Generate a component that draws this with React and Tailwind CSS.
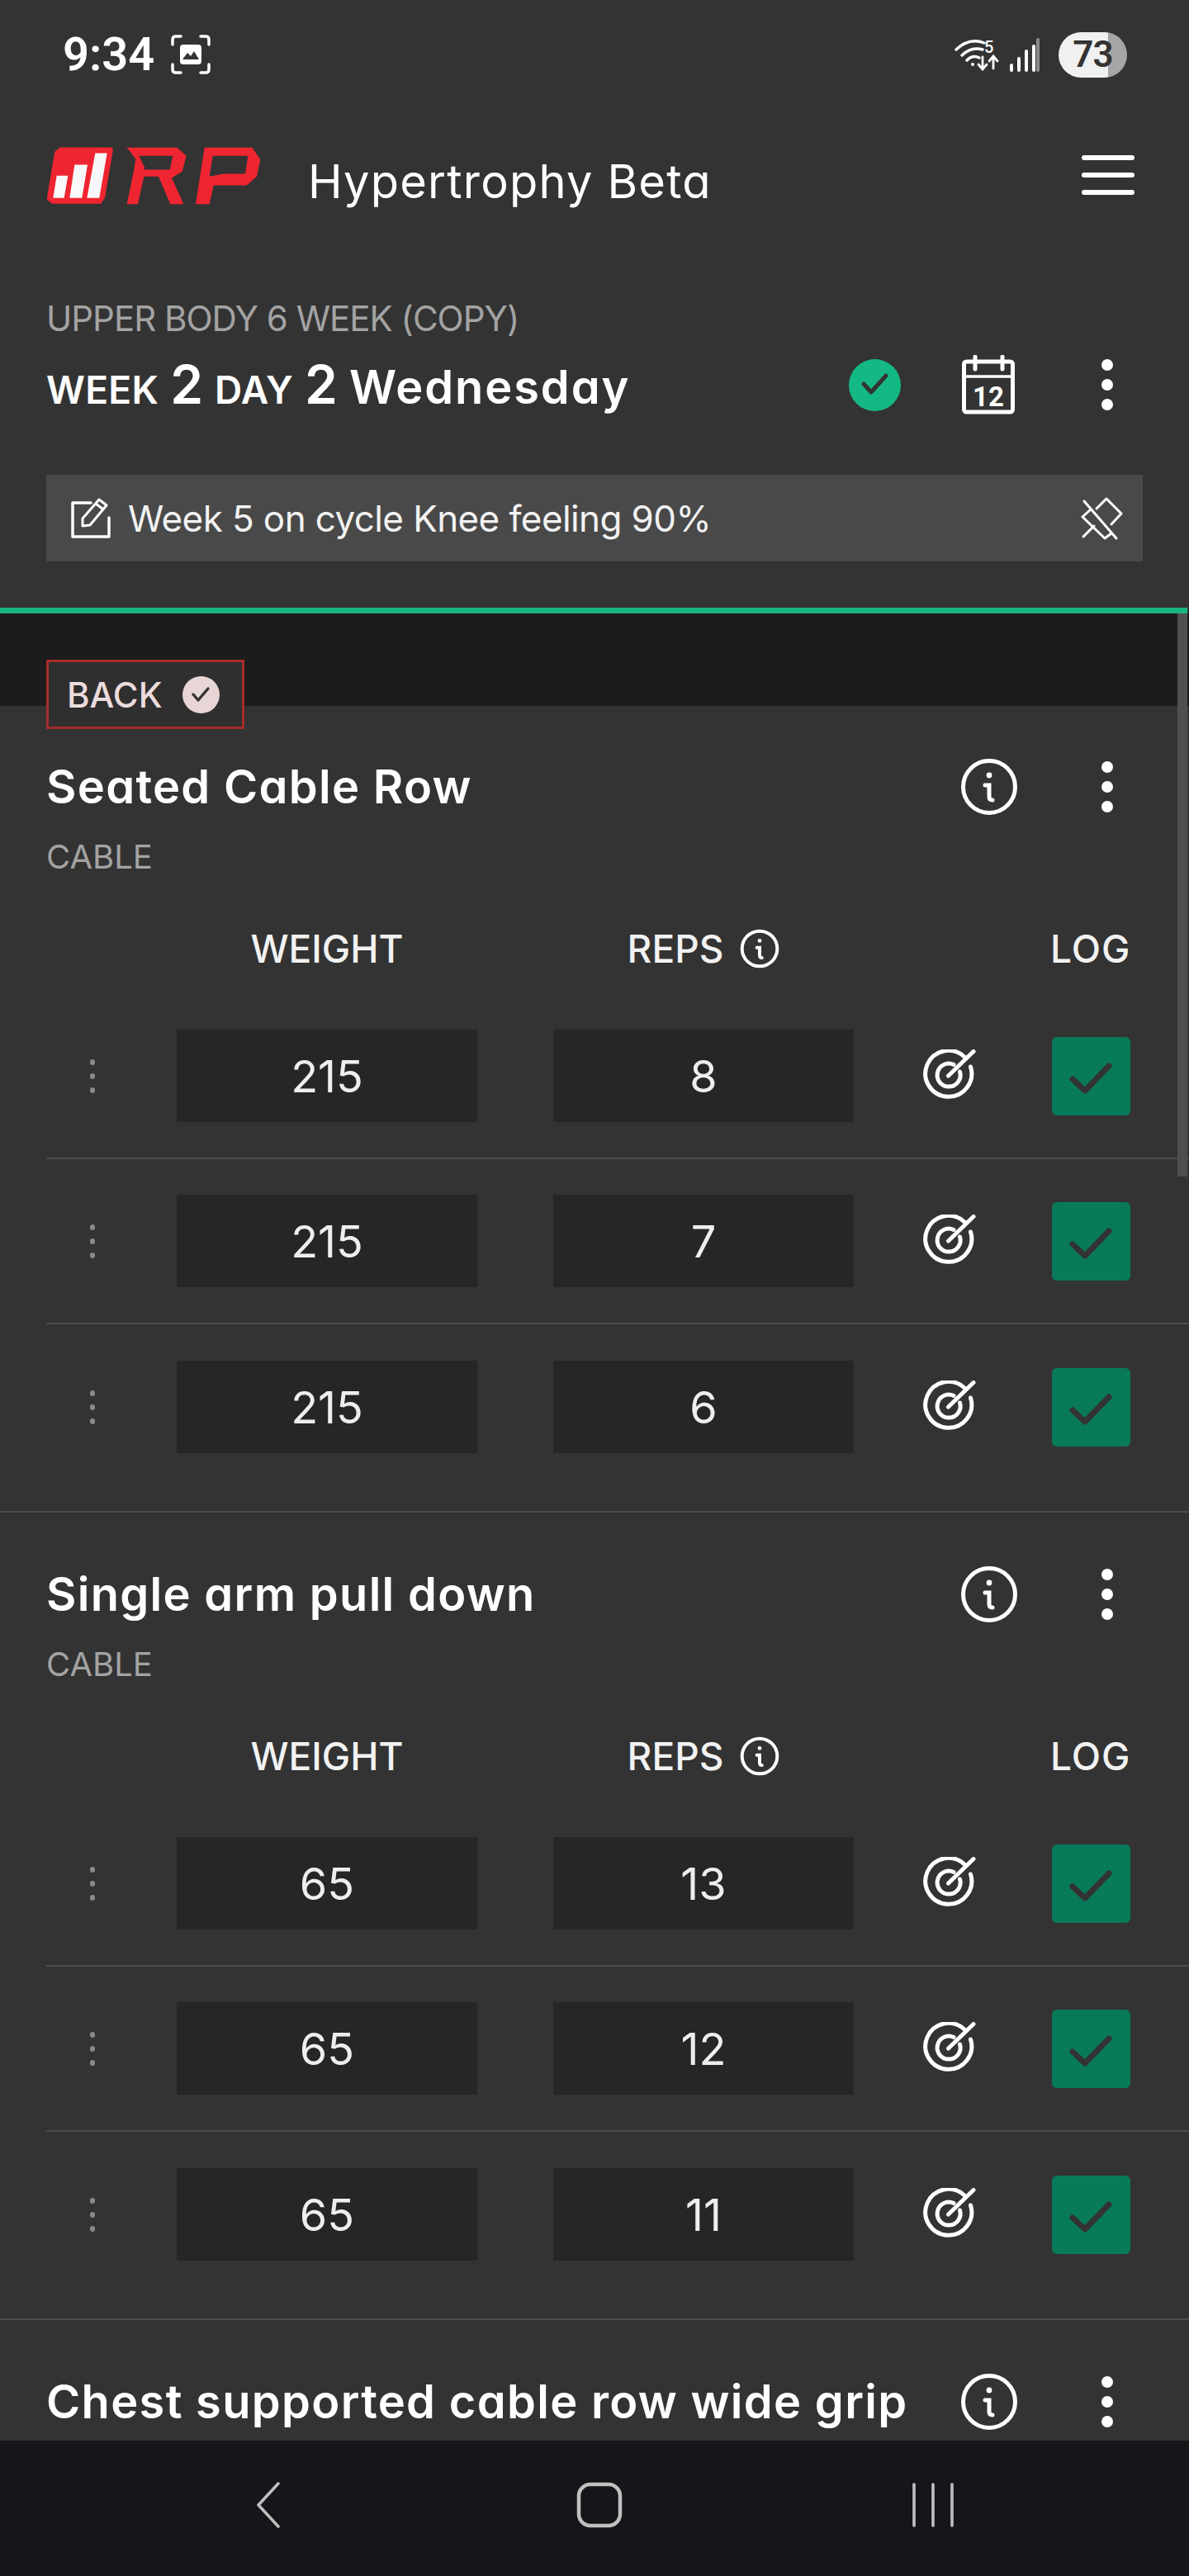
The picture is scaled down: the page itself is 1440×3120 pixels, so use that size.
const font = "font-['Inter',sans-serif] [font-feature-settings:'cv11']"

function Dots({ className = 'bg-white', size = 'w-[14px] h-[14px]', gap = 'gap-[10px]' }) {
  return (
    <div className={`flex flex-col items-center ${gap}`}>
      <span className={`rounded-full ${size} ${className}`} />
      <span className={`rounded-full ${size} ${className}`} />
      <span className={`rounded-full ${size} ${className}`} />
    </div>
  )
}

function InfoIcon({ size = 70, stroke = 5 }) {
  return (
    <svg width={size} height={size} viewBox="0 0 70 70" fill="none" stroke="white" strokeWidth={stroke * (70 / size)} strokeLinecap="round">
      <circle cx="35" cy="35" r={35 - (stroke * (70 / size)) / 2 - 1} />
      <circle cx="35" cy="21" r="3.4" fill="white" stroke="none" />
      <path d="M30 33 H35 V47 Q35 51 39 51" />
    </svg>
  )
}

function TargetIcon() {
  return (
    <svg width="64" height="64" viewBox="0 0 64 64" fill="none" stroke="white" strokeWidth="5" strokeLinecap="round">
      <path d="M50 9 A28 28 0 1 0 57.5 21" />
      <path d="M37 18.4 A14 14 0 1 0 44.5 27" />
      <path d="M30.5 32 L61 2.5" />
    </svg>
  )
}

function CheckBox() {
  return (
    <div className="w-[95px] h-[95px] rounded-[6px] bg-[#087a5a] flex items-center justify-center">
      <svg width="95" height="95" viewBox="0 0 95 95" fill="none" stroke="#333333" strokeWidth="7" strokeLinecap="round" strokeLinejoin="round">
        <path d="M25 51 L40 65 L69 35" />
      </svg>
    </div>
  )
}

function SetRow({ weight, reps, last }) {
  return (
    <div className={`h-[200px] ml-[56px] flex items-center ${last ? '' : 'border-b-2 border-[#4c4c4c]'}`}>
      <div className="w-[158px] flex justify-start pl-[53px]">
        <Dots className="bg-[#8a8a8a]" size="w-[6px] h-[7px]" gap="gap-[10px]" />
      </div>
      <div className="w-[364px] h-[112px] bg-[#262626] flex items-center justify-center text-[54px] text-[#eeeeee]">{weight}</div>
      <div className="w-[364px] h-[112px] ml-[92px] bg-[#262626] flex items-center justify-center text-[54px] text-[#eeeeee]">{reps}</div>
      <div className="ml-[84px]"><TargetIcon /></div>
      <div className="ml-[92px]"><CheckBox /></div>
    </div>
  )
}

function Exercise({ name, sets }) {
  return (
    <section className={sets.length ? 'pb-[26px] border-b-2 border-[#4c4c4c]' : ''}>
      <div className="h-[70px] pl-[56px] pr-[92px] flex items-center justify-between">
        <h2 className="text-[56px] font-semibold text-white tracking-[1.3px] whitespace-nowrap">{name}</h2>
        <div className="flex items-center gap-[101px]">
          <InfoIcon />
          <Dots />
        </div>
      </div>
      {sets.length > 0 && (
        <>
          <div className="mt-[26px] pl-[56px] text-[40px] leading-[48px] text-[#a3a3a3]">CABLE</div>
          <div className="mt-[62px] h-[50px] flex items-center text-[46px] font-medium text-[#f2f2f2]">
            <div className="ml-[214px] w-[364px] text-center">WEIGHT</div>
            <div className="ml-[92px] w-[364px] flex items-center justify-center gap-[20px]">
              <span>REPS</span>
              <InfoIcon size={48} stroke={4} />
            </div>
            <div className="ml-[238px] w-[96px] text-center tracking-[1px]">LOG</div>
          </div>
          <div className="mt-[30px]">
            {sets.map((s, i) => (
              <SetRow key={i} weight={s[0]} reps={s[1]} last={i === sets.length - 1} />
            ))}
          </div>
        </>
      )}
    </section>
  )
}

function Logo() {
  return (
    <svg width="260" height="71" viewBox="50 80 780 212" className="shrink-0">
      <path fill="#ef2531" d="M98 84 H278 Q291 84 289 97 L260 268 L245 289 H68 L50 274 V265 L78 100 Z" />
      <path fill="#f8f8f8" d="M85 187 H126 L112 268 H72 Z M150 147 H197 L177 268 H132 Z M225 105 H268 L240 268 H195 Z" />
      <path fill="#ef2531" fillRule="evenodd" d="M340 85 H522 L556 115 L541 172 L503 195 L546 290 H498 L455 190 H402 L380 290 H340 L366 165 L372 125 Z M384 115 H507 L496 165 H402 L405 158 Z" />
      <path fill="#ef2531" fillRule="evenodd" d="M622 85 H795 L825 128 L812 190 L775 222 H655 L640 290 H590 Z M652 115 L640 190 L690 180 H770 L780 115 Z" />
    </svg>
  )
}

function StatusBar() {
  return (
    <div className="h-[132px] pl-[76px] pr-[75px] flex items-center justify-between font-['Roboto',sans-serif]">
      <div className="flex items-center gap-[20px]">
        <span className="text-[56px] font-semibold text-white leading-none">9:34</span>
        <svg width="48" height="48" viewBox="0 0 48 48" fill="none" stroke="white" strokeWidth="3.5" strokeLinecap="round">
          <path d="M2 12 V6 Q2 2 6 2 H12 M36 2 H42 Q46 2 46 6 V12 M46 36 V42 Q46 46 42 46 H36 M12 46 H6 Q2 46 2 42 V36" />
          <rect x="11" y="12" width="26" height="24" rx="4" fill="white" stroke="none" />
          <path d="M14 30 L20 22 L24 26 L28 20 L34 30 Z" fill="#333333" stroke="none" />
        </svg>
      </div>
      <div className="flex items-center">
        <svg width="54" height="40" viewBox="0 0 54 40" fill="none" stroke="white" strokeWidth="3.4" strokeLinecap="round">
          <path d="M2 14 Q18 -1 36 6" />
          <path d="M9 21 Q20 10 34 14" />
          <path d="M15 27 Q22 20 30 24" />
          <circle cx="22" cy="32" r="2" fill="white" stroke="none" />
          <path d="M34 23 V37 M29 32 L34 38 L39 32" strokeWidth="2.8" />
          <path d="M47 37 V23 M42 28 L47 22 L52 28" strokeWidth="2.8" />
          <text x="36" y="18" fontSize="20" fill="white" stroke="none" fontWeight="500">5</text>
        </svg>
        <svg className="ml-[12px]" width="38" height="42" viewBox="0 0 38 42" fill="none" strokeWidth="4" strokeLinecap="round">
          <path d="M3 40 V34 M12 40 V26 M21 40 V17 M30 40 V11" stroke="white" />
          <path d="M35 40 V3" stroke="#8c8c8c" />
        </svg>
        <div className="ml-[22px] w-[83px] h-[55px] rounded-full bg-[linear-gradient(90deg,#f0f0f0_72%,#a6a6a6_72%)] flex items-center justify-center text-[44px] font-semibold text-[#333333] tracking-[-1px]">
          73
        </div>
      </div>
    </div>
  )
}

function TopBar() {
  return (
    <div className="h-[160px] pl-[57px] pr-[66px] flex items-center">
      <Logo />
      <div className="ml-[56px] text-[56px] text-white pt-[16px] tracking-[1.2px]">Hypertrophy Beta</div>
      <div className="ml-auto w-[64px] flex flex-col gap-[15px]">
        <span className="h-[6px] rounded-full bg-white" />
        <span className="h-[6px] rounded-full bg-white" />
        <span className="h-[6px] rounded-full bg-white" />
      </div>
    </div>
  )
}

function WorkoutHeader() {
  return (
    <>
      <div className="mt-[66px] pl-[56px] h-[54px] flex items-center text-[42px] text-[#a3a3a3] tracking-[-1px]">UPPER BODY 6 WEEK (COPY)</div>
      <div className="mt-[14px] h-[80px] pl-[56px] pr-[92px] flex items-center">
        <div className="flex items-baseline font-semibold text-white">
          <span className="text-[46px] tracking-[0.3px]">WEEK</span>
          <span className="text-[64px] ml-[14px]">2</span>
          <span className="text-[46px] ml-[14px] tracking-[0.3px]">DAY</span>
          <span className="text-[64px] ml-[14px]">2</span>
          <span className="ml-[14px] text-[56px] tracking-[1.9px]">Wednesday</span>
        </div>
        <div className="ml-auto w-[63px] h-[63px] rounded-full bg-[#14b885] flex items-center justify-center">
          <svg width="34" height="32" viewBox="0 0 34 32" fill="none" stroke="#333333" strokeWidth="5" strokeLinecap="round" strokeLinejoin="round">
            <path d="M3 15 L12 25 L30 5" />
          </svg>
        </div>
        <svg className="ml-[74px]" width="64" height="72" viewBox="0 0 64 72" fill="none" stroke="white" strokeWidth="5">
          <rect x="2.5" y="8" width="59" height="61" rx="3" />
          <path d="M2 26 H62" strokeWidth="3.5" />
          <path d="M16 2 V17 M49 2 V17" strokeLinecap="round" />
          <text x="32" y="62" textAnchor="middle" fontSize="33" fontWeight="700" fill="white" stroke="none" fontFamily="Roboto">12</text>
        </svg>
        <div className="ml-[105px]"><Dots /></div>
      </div>
      <div className="mt-[69px] mx-[56px] h-[105px] bg-[#494949] pl-[29px] pr-[24px] flex items-center">
        <svg width="50" height="50" viewBox="0 0 50 50" fill="none" stroke="white" strokeWidth="3.5" strokeLinecap="round" strokeLinejoin="round">
          <path d="M25 6 H3 V47 H47 V24" />
          <path d="M15 34 V25 L35 2 L44 9 L24 33 Z M31 7 L40 14" strokeWidth="3" />
        </svg>
        <span className="ml-[20px] text-[44px] text-[#f2f2f2] tracking-[-0.6px]">Week 5 on cycle Knee feeling 90%</span>
        <svg className="ml-auto" width="52" height="52" viewBox="0 0 52 52" fill="none" stroke="white" strokeWidth="3" strokeLinecap="round" strokeLinejoin="round">
          <path d="M5 5 L44 50" />
          <path d="M20 14 L32 2 L50 20 L38 33" />
          <path d="M13 15 L3 24 L30 50 L38 44" />
          <path d="M4 48 L17 35" />
        </svg>
      </div>
    </>
  )
}

const exercises = [
  { name: 'Seated Cable Row', sets: [['215', '8'], ['215', '7'], ['215', '6']] },
  { name: 'Single arm pull down', sets: [['65', '13'], ['65', '12'], ['65', '11']] },
  { name: 'Chest supported cable row wide grip', sets: [] },
]

export default function App() {
  return (
    <div className={`relative w-[1440px] h-[3120px] bg-[#333333] flex flex-col overflow-hidden ${font}`}>
      <StatusBar />
      <TopBar />
      <WorkoutHeader />

      <div className="mt-[56px] h-[7px] w-[1438px] bg-[#19b583] shrink-0" />

      <div className="relative flex-1 overflow-hidden">
        <div className="h-[112px] bg-[#1c1c1c] pl-[56px] flex items-start pt-[56px]">
          <div className="relative w-[240px] h-[84px] border-[3px] border-[#a82b2b] bg-[#2f2f2f] flex items-center pl-[22px] gap-[24px] text-[#ecdcdc]">
            <span className="text-[42px] font-medium">BACK</span>
            <div className="w-[45px] h-[45px] rounded-full bg-[#e8d5d5] flex items-center justify-center">
              <svg width="24" height="22" viewBox="0 0 24 22" fill="none" stroke="#333333" strokeWidth="3.4" strokeLinecap="round" strokeLinejoin="round">
                <path d="M3 11 L9 18 L21 4" />
              </svg>
            </div>
          </div>
        </div>
        <div className="pt-[63px] flex flex-col gap-[64px]">
          {exercises.map(ex => (
            <Exercise key={ex.name} name={ex.name} sets={ex.sets} />
          ))}
        </div>
        <div className="absolute right-[2px] top-0 w-[12px] h-[682px] bg-[#4f4f4f]" />
      </div>

      <div className="h-[164px] bg-[#14161a] shrink-0 flex items-center pl-[310px] pb-[8px]">
        <svg width="30" height="58" viewBox="0 0 30 58" fill="none" stroke="#c0c0c0" strokeWidth="3.5" strokeLinecap="round" strokeLinejoin="round">
          <path d="M27 3 L3 29 L27 55" />
        </svg>
        <svg width="56" height="56" viewBox="0 0 56 56" fill="none" stroke="#c0c0c0" strokeWidth="4.5" className="ml-[358px]">
          <rect x="3" y="3" width="50" height="50" rx="14" />
        </svg>
        <svg width="52" height="56" viewBox="0 0 52 56" fill="none" stroke="#c0c0c0" strokeWidth="3.6" strokeLinecap="round" className="ml-[350px]">
          <path d="M3 3 V53 M26 3 V53 M49 3 V53" />
        </svg>
      </div>
    </div>
  )
}
